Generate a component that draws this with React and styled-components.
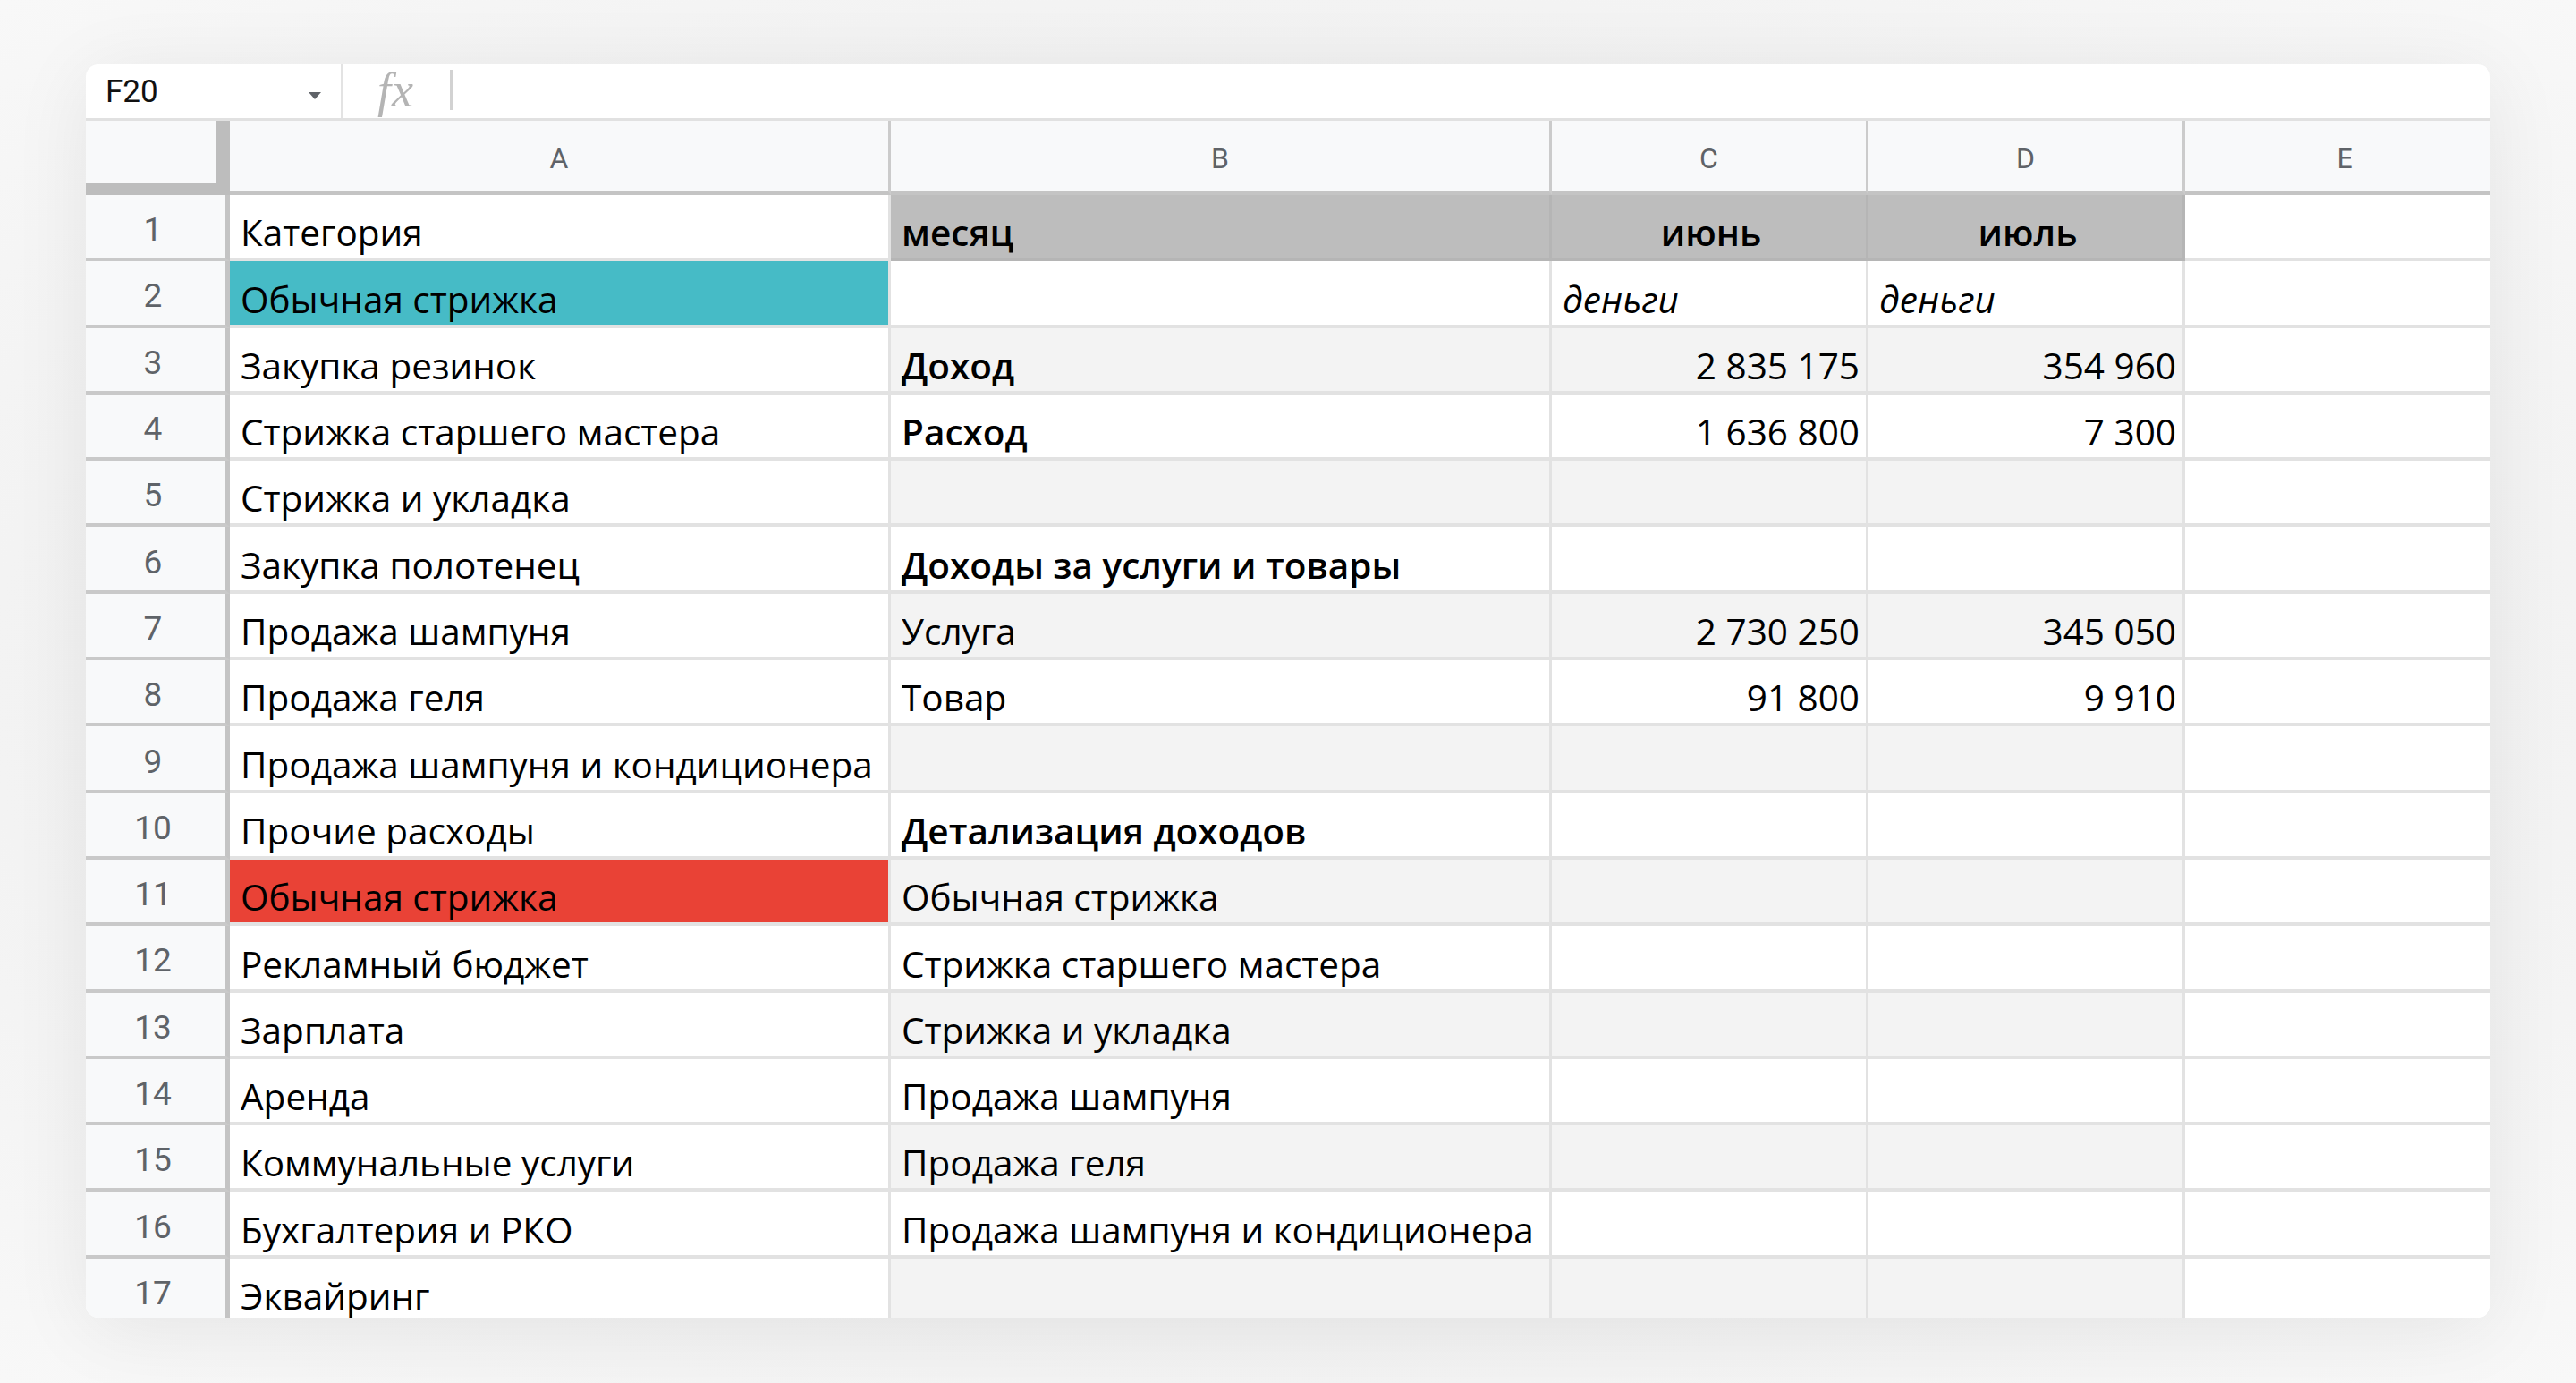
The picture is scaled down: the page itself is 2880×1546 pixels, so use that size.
import React from "react";
import styled, { createGlobalStyle } from "styled-components";

const GlobalStyle = createGlobalStyle`
  body {
    margin: 0;
    background: #f6f6f6;
    font-family: "Open Sans", "Liberation Sans", sans-serif;
  }
`;

const Page = styled.div`
  width: 2880px;
  height: 1546px;
  box-sizing: border-box;
  padding: 72px 96px 73px;
  background: radial-gradient(ellipse at center, #eeeeee 0%, #f1f1f1 60%, #f8f8f8 100%);
`;

const Card = styled.div`
  height: 100%;
  background: #fff;
  border-radius: 14px;
  overflow: hidden;
  box-shadow: 0 12px 90px rgba(0, 0, 0, 0.07);
  display: flex;
  flex-direction: column;
`;

const FormulaBar = styled.div`
  height: 63px;
  flex: none;
  box-sizing: border-box;
  border-bottom: 3px solid #e1e1e1;
  display: flex;
  align-items: stretch;
`;

const NameBox = styled.div`
  width: 288px;
  box-sizing: border-box;
  padding: 0 22px;
  display: flex;
  align-items: center;
  justify-content: space-between;
  border-right: 3px solid #e3e3e3;
  font-family: Roboto, "Liberation Sans", sans-serif;
  font-size: 35px;
  color: #111;
`;

const Caret = styled.span`
  width: 0;
  height: 0;
  margin-top: 10px;
  border-left: 7px solid transparent;
  border-right: 7px solid transparent;
  border-top: 8px solid #5f6368;
`;

const Fx = styled.div`
  width: 122px;
  display: flex;
  align-items: center;
  padding-left: 36px;
  box-sizing: border-box;
  position: relative;

  &::after {
    content: "";
    position: absolute;
    right: 0;
    top: 6px;
    bottom: 9px;
    width: 3px;
    background: #d2d2d2;
  }
`;

const FxLabel = styled.span`
  font-family: "Liberation Serif", serif;
  font-style: italic;
  font-size: 54px;
  line-height: 52px;
  padding: 0 4px 2px 2px;
  letter-spacing: 1px;
  color: #b4b4b4;
`;

const Sheet = styled.div`
  flex: 1;
  display: grid;
  grid-template-columns: 161px 739px 739px 354px 354px 360px;
  grid-auto-rows: 74.3px;
  grid-template-rows: 83px;
  align-content: start;
`;

const Corner = styled.div`
  background: #f8f9fa;
  box-sizing: border-box;
  border-right: 15px solid #bdbdbd;
  border-bottom: 15px solid #bdbdbd;
  margin-bottom: -2px;
`;

const ColHead = styled.div`
  background: #f8f9fa;
  box-sizing: border-box;
  border-right: 3px solid #cbcbcb;
  border-bottom: 4px solid #c4c4c4;
  display: flex;
  align-items: center;
  justify-content: center;
  padding-top: 4px;
  font-family: Roboto, "Liberation Sans", sans-serif;
  font-size: 32px;
  color: #5f6368;
`;

const RowHead = styled.div`
  background: #f8f9fa;
  box-sizing: border-box;
  border-right: 5px solid #c4c4c4;
  border-bottom: 4px solid #c9c9c9;
  display: flex;
  align-items: center;
  justify-content: center;
  padding-right: 6px;
  padding-top: 7px;
  font-family: Roboto, "Liberation Sans", sans-serif;
  font-size: 37px;
  color: #5f6368;
`;

const Cell = styled.div`
  background: ${({ $bg }) => $bg || "#fff"};
  box-sizing: border-box;
  border-right: 3px solid ${({ $line }) => $line || "#e2e2e2"};
  border-bottom: 4px solid ${({ $line }) => $line || "#e2e2e2"};
  display: flex;
  align-items: flex-end;
  justify-content: ${({ $align }) =>
    $align === "right" ? "flex-end" : $align === "center" ? "center" : "flex-start"};
  padding: 0 7px 3px 12px;
  overflow: hidden;
  white-space: nowrap;
  font-size: 40.5px;
  line-height: 50px;
  color: #000;
  font-weight: ${({ $bold }) => ($bold ? 600 : 400)};
  font-style: ${({ $italic }) => ($italic ? "italic" : "normal")};
`;

const HEAD = "#bdbdbd";
const BAND = "#f3f3f3";
const TEAL = "#46bbc6";
const RED = "#e94236";

const b = (t) => ({ t, bold: true });
const n = (t) => ({ t, align: "right" });

const rows = [
  [
    "Категория",
    { t: "месяц", bold: true, bg: HEAD },
    { t: "июнь", bold: true, bg: HEAD, align: "center" },
    { t: "июль", bold: true, bg: HEAD, align: "center" },
  ],
  [{ t: "Обычная стрижка", bg: TEAL }, "", { t: "деньги", italic: true }, { t: "деньги", italic: true }],
  ["Закупка резинок", b("Доход"), n("2 835 175"), n("354 960")],
  ["Стрижка старшего мастера", b("Расход"), n("1 636 800"), n("7 300")],
  ["Стрижка и укладка", "", "", ""],
  ["Закупка полотенец", b("Доходы за услуги и товары"), "", ""],
  ["Продажа шампуня", "Услуга", n("2 730 250"), n("345 050")],
  ["Продажа геля", "Товар", n("91 800"), n("9 910")],
  ["Продажа шампуня и кондиционера", "", "", ""],
  ["Прочие расходы", b("Детализация доходов"), "", ""],
  [{ t: "Обычная стрижка", bg: RED }, "Обычная стрижка", "", ""],
  ["Рекламный бюджет", "Стрижка старшего мастера", "", ""],
  ["Зарплата", "Стрижка и укладка", "", ""],
  ["Аренда", "Продажа шампуня", "", ""],
  ["Коммунальные услуги", "Продажа геля", "", ""],
  ["Бухгалтерия и РКО", "Продажа шампуня и кондиционера", "", ""],
  ["Эквайринг", "", "", ""],
];

const norm = (c) => (typeof c === "string" ? { t: c } : c);

const App = () => {
  return (
    <Page>
      <GlobalStyle />
      <Card>
        <FormulaBar>
          <NameBox>
            F20
            <Caret />
          </NameBox>
          <Fx>
            <FxLabel>fx</FxLabel>
          </Fx>
        </FormulaBar>
        <Sheet>
          <Corner />
          {["A", "B", "C", "D", "E"].map((l) => (
            <ColHead key={l}>{l}</ColHead>
          ))}
          {rows.map((row, ri) => {
            const num = ri + 1;
            const banded = num >= 3 && num % 2 === 1;
            const cells = row.map(norm);
            return (
              <React.Fragment key={num}>
                <RowHead>{num}</RowHead>
                {cells.map((c, ci) => {
                  const bg = c.bg || (ci > 0 && banded ? BAND : undefined);
                  return (
                    <Cell
                      key={ci}
                      $bg={bg}
                      $bold={c.bold}
                      $italic={c.italic}
                      $align={c.align}
                      $line={c.bg === HEAD ? "#b5b5b5" : undefined}
                    >
                      {c.t}
                    </Cell>
                  );
                })}
                <Cell />
              </React.Fragment>
            );
          })}
        </Sheet>
      </Card>
    </Page>
  );
};

export default App;
